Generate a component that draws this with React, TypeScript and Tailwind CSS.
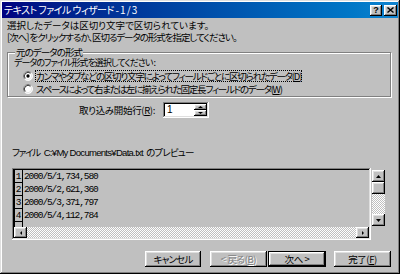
import React from "react";

const raised =
  "shadow-[inset_-1px_-1px_#000,inset_1px_1px_#fff,inset_-2px_-2px_#808080,inset_2px_2px_#dfdfdf]";
const sunken =
  "shadow-[inset_-1px_-1px_#fff,inset_1px_1px_#808080,inset_-2px_-2px_#dfdfdf,inset_2px_2px_#000]";
const dither =
  "bg-[repeating-conic-gradient(#ffffff_0_25%,#c0c0c0_0_50%)] bg-[length:2px_2px]";

function Tri({ dir, w = 7, h = 4 }: { dir: "up" | "down" | "left" | "right"; w?: number; h?: number }) {
  let pts = "";
  if (dir === "up") pts = `0,${h} ${w},${h} ${w / 2},0`;
  if (dir === "down") pts = `0,0 ${w},0 ${w / 2},${h}`;
  if (dir === "left") pts = `${w},0 ${w},${h} 0,${h / 2}`;
  if (dir === "right") pts = `0,0 0,${h} ${w},${h / 2}`;
  return (
    <svg width={w} height={h} viewBox={`0 0 ${w} ${h}`} className="block">
      <polygon points={pts} fill="#000" />
    </svg>
  );
}

function Radio({ checked }: { checked?: boolean }) {
  return (
    <svg width="10" height="10" viewBox="0 0 12 12" className="block shrink-0">
      <circle cx="6" cy="6" r="5.5" fill="#fff" />
      <path d="M2.11 9.89 A5.5 5.5 0 0 1 9.89 2.11" stroke="#808080" strokeWidth="1" fill="none" />
      <path d="M9.89 2.11 A5.5 5.5 0 0 1 2.11 9.89" stroke="#fff" strokeWidth="1" fill="none" />
      <path d="M2.82 9.18 A4.5 4.5 0 0 1 9.18 2.82" stroke="#000" strokeWidth="1" fill="none" />
      <path d="M9.18 2.82 A4.5 4.5 0 0 1 2.82 9.18" stroke="#dfdfdf" strokeWidth="1" fill="none" />
      {checked && <circle cx="6" cy="6" r="2" fill="#000" />}
    </svg>
  );
}

const rows = ["2000/5/1,734,580", "2000/5/2,621,360", "2000/5/3,371,797", "2000/5/4,112,784"];

export default function App() {
  return (
    <div
      className={`w-[400px] h-[274px] bg-[#c0c0c0] flex flex-col p-[2px] text-[9.5px] leading-[12px] text-black font-['Noto_Sans_CJK_JP','Noto_Sans',sans-serif] [font-feature-settings:'palt'] shadow-[inset_-1px_-1px_#000,inset_1px_1px_#dfdfdf,inset_-2px_-2px_#808080,inset_2px_2px_#fff]`}
    >
      {/* Title bar */}
      <div className="h-[16px] bg-linear-to-r from-[#000080] to-[#1084d0] flex items-center justify-between pl-[2px] pr-[1px]">
        <span className="text-white text-[10px] leading-[12px] tracking-[-0.55px]">テキスト ファイル ウィザード - 1 / 3</span>
        <div className="flex items-center gap-[2px]">
          <div className={`w-[12px] h-[11px] bg-[#c0c0c0] ${raised} flex items-center justify-center text-[9px] leading-none font-bold font-['Liberation_Sans',sans-serif]`}>
            ?
          </div>
          <div className={`w-[13px] h-[11px] bg-[#c0c0c0] ${raised} flex items-center justify-center`}>
            <svg width="7" height="6" viewBox="0 0 7 6">
              <path d="M0.5 0.5 L6.5 5.5 M6.5 0.5 L0.5 5.5" stroke="#000" strokeWidth="1.4" />
            </svg>
          </div>
        </div>
      </div>

      {/* Instructions */}
      <div className="mt-[1px] ml-[5px]">選択したデータは区切り文字で区切られています。</div>
      <div className="ml-[5px] tracking-[-1.05px]">[次へ] をクリックするか、区切るデータの形式を指定してください。</div>

      {/* Group box */}
      <fieldset className="mt-[3px] ml-[5px] mr-[7px] border border-[#808080] shadow-[inset_1px_1px_#fff,1px_1px_#fff] px-[5px] pb-[1px]">
        <legend className="ml-[2px] px-[1px] bg-[#c0c0c0] tracking-[-0.9px]">元のデータの形式</legend>
        <div className="-mt-[1px] ml-[1px] text-[9px] tracking-[-0.95px]">データのファイル形式を選択してください :</div>
        <div className="flex items-center h-[13px] ml-[10px]">
          <Radio checked />
          <span className="ml-[2px] px-[1px] outline-1 outline-dotted outline-black -outline-offset-1 tracking-[-1.2px]">
            カンマやタブなどの区切り文字によってフィールドごとに区切られたデータ(<span className="underline">D</span>)
          </span>
        </div>
        <div className="flex items-center h-[13px] ml-[10px]">
          <Radio />
          <span className="ml-[3px] tracking-[-1.25px]">
            スペースによって右または左に揃えられた固定長フィールドのデータ(<span className="underline">W</span>)
          </span>
        </div>
      </fieldset>

      {/* Start row */}
      <div className="mt-[5px] flex items-center h-[16px]">
        <div className="w-[153px] text-right tracking-[-0.35px]">
          取り込み開始行(<span className="underline">R</span>):
        </div>
        <div className={`ml-[8px] w-[46px] h-[16px] bg-white ${sunken} flex items-center justify-between pl-[4px] pr-[2px]`}>
          <span className="font-['Liberation_Sans',sans-serif] text-[10px]">1</span>
          <div className="flex flex-col">
            <div className={`w-[13px] h-[6px] bg-[#c0c0c0] ${raised} flex items-center justify-center`}>
              <Tri dir="up" w={5} h={2} />
            </div>
            <div className={`w-[13px] h-[6px] bg-[#c0c0c0] ${raised} flex items-center justify-center`}>
              <Tri dir="down" w={5} h={2} />
            </div>
          </div>
        </div>
      </div>

      {/* Preview label */}
      <div className="mt-[28px] ml-[10px] flex items-baseline">
        <span className="tracking-[-1.3px]">ファイル</span>
        <span className="ml-[4px] font-['Liberation_Sans',sans-serif] text-[9.5px] tracking-[-0.7px]">C:¥My Documents¥Data.txt</span>
        <span className="ml-[3px] tracking-[-0.8px]">のプレビュー</span>
      </div>

      {/* Preview */}
      <div className="mt-[9px] ml-[10px] flex items-start">
        <div className={`w-[359px] h-[72px] p-[2px] ${sunken} flex flex-col`}>
          <div className="h-[57px] flex flex-col">
            {rows.map((r, i) => (
              <div key={i} className="flex h-[13px] items-center">
                <div className="w-[9px] h-[13px] border border-[#000] border-t-0 flex items-end justify-center font-['Liberation_Mono',monospace] text-[9.5px] leading-[11px]">
                  {i + 1}
                </div>
                <span className="ml-[1px] font-['Liberation_Mono',monospace] text-[9.5px] tracking-[-1.1px]">{r}</span>
              </div>
            ))}
            <div className="w-[9px] h-[5px] border-l border-r border-[#000]" />
          </div>
          <div className={`h-[11px] flex ${dither}`}>
            <div className={`w-[13px] h-[11px] bg-[#c0c0c0] ${raised} flex items-center justify-center`}>
              <Tri dir="left" w={2} h={4} />
            </div>
            <div className="flex-1" />
            <div className={`w-[13px] h-[11px] bg-[#c0c0c0] ${raised} flex items-center justify-center`}>
              <Tri dir="right" w={2} h={4} />
            </div>
          </div>
        </div>
        <div className={`mt-[2px] ml-[1px] w-[13px] h-[56px] flex flex-col ${dither}`}>
          <div className={`h-[12px] bg-[#c0c0c0] ${raised} flex items-center justify-center`}>
            <Tri dir="up" w={5} h={3} />
          </div>
          <div className={`h-[12px] bg-[#c0c0c0] ${raised}`} />
          <div className="flex-1" />
          <div className={`h-[12px] bg-[#c0c0c0] ${raised} flex items-center justify-center`}>
            <Tri dir="down" w={5} h={3} />
          </div>
        </div>
      </div>

      {/* Buttons */}
      <div className="mt-[11px] ml-[143px] flex items-center h-[16px]">
        <div className={`w-[56px] h-[16px] bg-[#c0c0c0] ${raised} flex items-center justify-center tracking-[-0.8px]`}>キャンセル</div>
        <div className={`ml-[9px] w-[57px] h-[16px] bg-[#c0c0c0] ${raised} flex items-center justify-center text-[#808080] [text-shadow:1px_1px_#fff] tracking-[-0.4px]`}>
          &lt; 戻る(<span className="underline">B</span>)
        </div>
        <div className="ml-[1px] w-[58px] h-[16px] border border-black">
          <div className={`w-full h-full bg-[#c0c0c0] ${raised} flex items-center justify-center tracking-[-0.4px]`}>次へ &gt;</div>
        </div>
        <div className={`ml-[8px] w-[57px] h-[16px] bg-[#c0c0c0] ${raised} flex items-center justify-center tracking-[-0.4px]`}>
          完了(<span className="underline">F</span>)
        </div>
      </div>
    </div>
  );
}
